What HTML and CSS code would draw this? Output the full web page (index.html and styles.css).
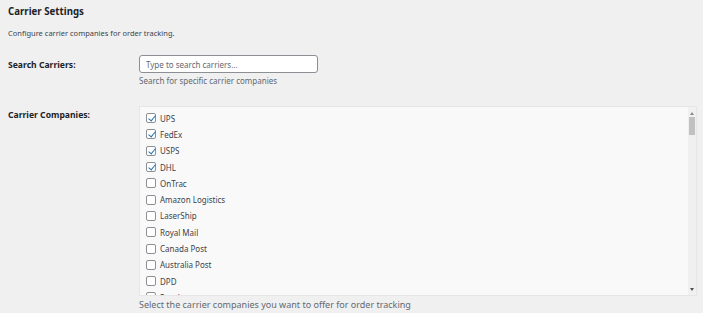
FILE: index.html
```html
<!DOCTYPE html>
<html lang="en">
<head>
    <meta charset="UTF-8">
    <meta name="viewport" content="width=device-width, initial-scale=1.0">
    <title>Carrier Settings</title>
    <link rel="stylesheet" href="styles.css">
</head>

<body>
    <!-- settings section -->
    <div class="wrap">
        <h2 class="title">Carrier Settings</h2>
        <p class="intro">Configure carrier companies for order tracking.</p>

        <div class="form-row">
            <label class="row-label" for="carrier-search">Search Carriers:</label>
            <div class="row-field">
                <input type="text" id="carrier-search" class="search-input" placeholder="Type to search carriers...">
                <p class="help">Search for specific carrier companies</p>
            </div>
        </div>

        <div class="form-row companies">
            <div class="row-label">Carrier Companies:</div>
            <div class="row-field">
                <div class="carrier-box">
                    <div class="carrier-list">
                        <label class="carrier"><input type="checkbox" checked> UPS</label>
                        <label class="carrier"><input type="checkbox" checked> FedEx</label>
                        <label class="carrier"><input type="checkbox" checked> USPS</label>
                        <label class="carrier"><input type="checkbox" checked> DHL</label>
                        <label class="carrier"><input type="checkbox"> OnTrac</label>
                        <label class="carrier"><input type="checkbox"> Amazon Logistics</label>
                        <label class="carrier"><input type="checkbox"> LaserShip</label>
                        <label class="carrier"><input type="checkbox"> Royal Mail</label>
                        <label class="carrier"><input type="checkbox"> Canada Post</label>
                        <label class="carrier"><input type="checkbox"> Australia Post</label>
                        <label class="carrier"><input type="checkbox"> DPD</label>
                        <label class="carrier"><input type="checkbox"> Purolator</label>
                        <label class="carrier"><input type="checkbox"> TNT</label>
                        <label class="carrier"><input type="checkbox"> Aramex</label>
                    </div>
                    <!-- fake scrollbar -->
                    <div class="scrollbar">
                        <span class="arrow up"></span>
                        <span class="thumb"></span>
                        <span class="track"></span>
                        <span class="arrow down"></span>
                    </div>
                </div>
                <p class="help help-bottom">Select the carrier companies you want to offer for order tracking</p>
            </div>
        </div>
    </div>
</body>
</html>
```

FILE: styles.css
```css
html {
    background-color: #f0f0f1;
}

body {
    font-family: "Noto Sans", "Open Sans", sans-serif;
    font-size: 8px;
    color: #3c434a;
    margin: 0;
    padding: 0 6px 0 8px;
}

.title {
    font-size: 9.7px;
    font-weight: bold;
    color: #1d2327;
    margin: 0;
    padding-top: 4px;
    line-height: 16px;
}

.intro {
    font-size: 7.5px;
    margin: 6px 0 0 0;
    line-height: 14px;
    color: #3c434a;
}

.form-row {
    display: flex;
    margin-top: 15px;
}

.companies {
    margin-top: 18px;
}

.row-label {
    width: 131px;
    flex-shrink: 0;
    font-size: 8.6px;
    font-weight: bold;
    color: #1d2327;
    padding-top: 3px;
    line-height: 14px;
}

.companies .row-label {
    padding-top: 2px;
}

.row-field {
    flex: 1;
}

.search-input {
    width: 179px;
    height: 18px;
    box-sizing: border-box;
    border: 1px solid #8c8f94;
    border-radius: 3px;
    background: #fff;
    font-family: inherit;
    font-size: 8px;
    padding: 0 6px;
    color: #2c3338;
    margin: 0;
    display: block;
}

.search-input::placeholder {
    color: #646970;
}

.help {
    margin: 1px 0 0 0;
    color: #646970;
    line-height: 14px;
}

.help-bottom {
    font-size: 9px;
    margin-top: 2px;
}

.carrier-box {
    display: flex;
    height: 190px;
    box-sizing: border-box;
    border: 1px solid #e6e6e6;
    background: #f9f9f9;
}

.carrier-list {
    flex: 1;
    overflow: hidden;
    padding: 3px 6px;
}

.scrollbar {
    width: 8px;
    display: flex;
    flex-direction: column;
    align-items: center;
    background: #f0f0f0;
    padding: 0 0 0 0;
}

.thumb {
    width: 6px;
    height: 18px;
    background: #c1c1c1;
    margin-top: 2px;
}

.track {
    flex: 1;
}

.arrow {
    width: 0;
    height: 0;
    border-left: 2.5px solid transparent;
    border-right: 2.5px solid transparent;
}

.arrow.up {
    border-bottom: 3px solid #8a8a8a;
    margin-top: 5px;
}

.arrow.down {
    border-top: 3px solid #505050;
    margin-bottom: 4px;
}

.carrier {
    display: flex;
    align-items: center;
    height: 16.3px;
    color: #3c434a;
}

.carrier input {
    appearance: none;
    -webkit-appearance: none;
    width: 10px;
    height: 10px;
    margin: 0 4px 0 0;
    border: 1px solid #8c8f94;
    border-radius: 2px;
    background: #fff;
    position: relative;
    flex-shrink: 0;
}

.carrier input:checked::before {
    content: "";
    position: absolute;
    left: 2.5px;
    top: 0px;
    width: 3px;
    height: 6px;
    border: solid #2271b1;
    border-width: 0 1.5px 1.5px 0;
    transform: rotate(40deg);
}
```
